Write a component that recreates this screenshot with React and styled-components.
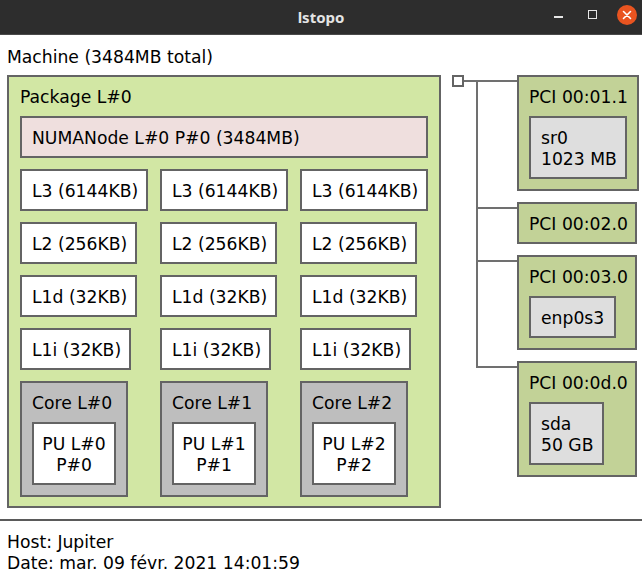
import React from "react";
import styled, { createGlobalStyle } from "styled-components";

const GlobalStyle = createGlobalStyle`
  html, body { margin: 0; padding: 0; background: #ffffff; }
  body { font-family: "DejaVu Sans", "Liberation Sans", sans-serif; }
  * { box-sizing: border-box; }
`;

const BORDER = "#646464";
const LINE = "#707070";

const Window = styled.div`
  width: 642px;
  height: 580px;
  display: flex;
  flex-direction: column;
  background: #ffffff;
  overflow: hidden;
  color: #000;
  font-size: 17.2px;
  line-height: 21px;
`;

const TitleBar = styled.div`
  height: 35px;
  flex: none;
  background: #2d2d2d;
  border-bottom: 1px solid #4a4a4a;
  display: grid;
  grid-template-columns: 1fr auto 1fr;
  align-items: center;
`;

const Title = styled.div`
  grid-column: 2;
  font-family: "Noto Sans", "DejaVu Sans", sans-serif;
  font-weight: 700;
  font-size: 15px;
  line-height: 20px;
  color: #e4e4e4;
  margin-top: -1px;
`;

const Controls = styled.div`
  grid-column: 3;
  justify-self: end;
  align-self: stretch;
  display: flex;
  align-items: flex-start;
  padding-right: 5px;
`;

const MinIcon = styled.div`
  width: 9px;
  height: 2px;
  margin-top: 16px;
  background: #e6e6e6;
`;

const MaxIcon = styled.div`
  width: 9px;
  height: 9px;
  margin-top: 10px;
  margin-left: 25px;
  border: 1.5px solid #e6e6e6;
`;

const CloseButton = styled.div`
  width: 20px;
  height: 20px;
  margin-top: 5px;
  margin-left: 20px;
  border-radius: 50%;
  background: #e95420;
  display: flex;
  align-items: center;
  justify-content: center;
`;

const Main = styled.div`
  padding: 12px 7px 11px;
`;

const Label = styled.div`
  white-space: pre;
  height: 21px;
`;

const MachineLabel = styled(Label)`
  margin-bottom: 7px;
`;

const MachineBody = styled.div`
  display: flex;
  align-items: flex-start;
`;

const Box = styled.div`
  border: 2px solid ${BORDER};
  background: ${(p) => p.$bg || "#ffffff"};
  width: ${(p) => (p.$w ? `${p.$w}px` : "auto")};
  padding: 10px 10px ${(p) => (p.$nested ? "10px" : "7px")};
  text-align: ${(p) => (p.$center ? "center" : "left")};
  flex: none;
`;

const Package = styled(Box)`
  width: 434px;
  padding: 10px 11px 9px;
`;

const HeadLabel = styled(Label)`
  margin-bottom: ${(p) => (p.$alone ? "0" : "8px")};
`;

const Numa = styled(Box)`
  width: 100%;
`;

const Columns = styled.div`
  display: grid;
  grid-template-columns: repeat(3, 128px);
  column-gap: 12px;
  margin-top: 11px;
`;

const Column = styled.div`
  display: flex;
  flex-direction: column;
  align-items: flex-start;
  gap: 11px;
`;

const MultiLine = styled.div`
  white-space: pre;
  line-height: 21px;
`;

const Pu = styled(Box)`
  height: 63px;
  padding: 10px 4px 7px;
  text-align: center;
`;

const IoTree = styled.div`
  display: flex;
  align-items: flex-start;
  margin-left: 11px;
`;

const HostBridge = styled.div`
  width: 12px;
  height: 12px;
  border: 2px solid ${BORDER};
  background: #ffffff;
  flex: none;
`;

const Stub = styled.div`
  width: 12px;
  margin-top: 5px;
  border-top: 2px solid ${LINE};
  flex: none;
`;

const Branches = styled.div`
  display: flex;
  flex-direction: column;
`;

const Branch = styled.div`
  display: flex;
  align-items: stretch;
`;

const Connector = styled.div`
  width: 41px;
  flex: none;
  display: grid;
  grid-template-rows: 5px 1fr;
`;

const ConnUp = styled.div`
  border-left: ${(p) => (p.$on ? `2px solid ${LINE}` : "none")};
`;

const ConnDown = styled.div`
  border-top: 2px solid ${LINE};
  border-left: ${(p) => (p.$on ? `2px solid ${LINE}` : "none")};
`;

const PciBox = styled(Box)`
  margin-bottom: ${(p) => (p.$last ? "0" : "11px")};
  align-self: flex-start;
`;

const OsDev = styled(Box)`
  padding-bottom: 7px;
`;

const Divider = styled.div`
  height: 2px;
  flex: none;
  background: #5a5a5a;
`;

const Footer = styled.div`
  padding: 11px 7px 0;
`;

const COLORS = {
  pkg: "#d2e7a4",
  numa: "#efdfde",
  core: "#bebebe",
  pci: "#c2d297",
  os: "#dedede",
};

const cores = [0, 1, 2];

const pciDevices = [
  { name: "PCI 00:01.1", w: 122, os: { lines: "sr0\n1023 MB", w: 98 } },
  { name: "PCI 00:02.0", w: 120 },
  { name: "PCI 00:03.0", w: 120, os: { lines: "enp0s3", w: 87 } },
  { name: "PCI 00:0d.0", w: 120, os: { lines: "sda\n50 GB", w: 75 } },
];

function CoreColumn({ i }) {
  return (
    <Column>
      <Box $w={128}><Label>L3 (6144KB)</Label></Box>
      <Box $w={117}><Label>L2 (256KB)</Label></Box>
      <Box $w={117}><Label>L1d (32KB)</Label></Box>
      <Box $w={111}><Label>L1i (32KB)</Label></Box>
      <Box $w={108} $bg={COLORS.core} $nested>
        <HeadLabel>{`Core L#${i}`}</HeadLabel>
        <Pu $w={84}>
          <MultiLine>{`PU L#${i}\nP#${i}`}</MultiLine>
        </Pu>
      </Box>
    </Column>
  );
}

export default function App() {
  return (
    <>
      <GlobalStyle />
      <Window>
        <TitleBar>
          <Title>lstopo</Title>
          <Controls>
            <MinIcon />
            <MaxIcon />
            <CloseButton>
              <svg width="10" height="10" viewBox="0 0 10 10">
                <path d="M1.5 1.5 L8.5 8.5 M8.5 1.5 L1.5 8.5" stroke="#ffffff" strokeWidth="1.6" strokeLinecap="round" />
              </svg>
            </CloseButton>
          </Controls>
        </TitleBar>
        <Main>
          <MachineLabel>Machine (3484MB total)</MachineLabel>
          <MachineBody>
            <Package $bg={COLORS.pkg}>
              <HeadLabel>Package L#0</HeadLabel>
              <Numa $bg={COLORS.numa}>
                <Label>NUMANode L#0 P#0 (3484MB)</Label>
              </Numa>
              <Columns>
                {cores.map((i) => (
                  <CoreColumn key={i} i={i} />
                ))}
              </Columns>
            </Package>
            <IoTree>
              <HostBridge />
              <Stub />
              <Branches>
                {pciDevices.map((d, idx) => {
                  const first = idx === 0;
                  const last = idx === pciDevices.length - 1;
                  return (
                    <Branch key={d.name}>
                      <Connector>
                        <ConnUp $on={!first} />
                        <ConnDown $on={!last} />
                      </Connector>
                      <PciBox $w={d.w} $bg={COLORS.pci} $last={last} $nested={!!d.os}>
                        <HeadLabel $alone={!d.os}>{d.name}</HeadLabel>
                        {d.os && (
                          <OsDev $w={d.os.w} $bg={COLORS.os}>
                            <MultiLine>{d.os.lines}</MultiLine>
                          </OsDev>
                        )}
                      </PciBox>
                    </Branch>
                  );
                })}
              </Branches>
            </IoTree>
          </MachineBody>
        </Main>
        <Divider />
        <Footer>
          <MultiLine>{"Host: Jupiter\nDate: mar. 09 févr. 2021 14:01:59"}</MultiLine>
        </Footer>
      </Window>
    </>
  );
}
